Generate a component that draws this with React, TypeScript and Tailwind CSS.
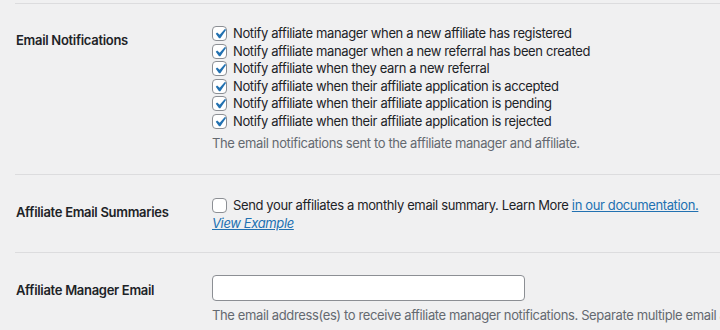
import React from 'react';

const font = { fontFamily: 'Inter, "Noto Sans", sans-serif' };

const Check = ({ checked }: { checked: boolean }) => (
  <span className="relative inline-block w-[15px] h-[15px] shrink-0 rounded-[4px] border border-[#8c8f94] bg-white">
    {checked && (
      <svg viewBox="0 0 20 20" className="absolute -left-[3px] -top-[3px] w-[20px] h-[20px]">
        <path d="M14.83 4.89l1.34.94-5.81 8.38H9.02L5.78 9.67l1.34-1.25 2.57 2.4z" fill="#2271b1" />
      </svg>
    )}
  </span>
);

const notifications = [
  'Notify affiliate manager when a new affiliate has registered',
  'Notify affiliate manager when a new referral has been created',
  'Notify affiliate when they earn a new referral',
  'Notify affiliate when their affiliate application is accepted',
  'Notify affiliate when their affiliate application is pending',
  'Notify affiliate when their affiliate application is rejected',
];

export default function App() {
  return (
    <div className="w-[720px] h-[330px] overflow-hidden bg-[#f0f0f1] text-[#1d2327] text-[13px] tracking-[-0.37px]" style={font}>
      <div className="pt-[3px] ml-[15px]">
        {/* Email notifications */}
        <div className="flex border-t border-[#dcdcde] pb-[22px]">
          <div className="w-[197px] shrink-0 pl-[1px] pt-[27px] font-semibold leading-[18px] tracking-[-0.3px]">Email Notifications</div>
          <div className="pt-[21px]">
            {notifications.map((n) => (
              <div key={n} className="flex items-center gap-[6px] h-[17.5px] whitespace-nowrap">
                <Check checked />
                <span>{n}</span>
              </div>
            ))}
            <p className="mt-[4px] leading-[18px] text-[#646970] whitespace-nowrap">
              The email notifications sent to the affiliate manager and affiliate.
            </p>
          </div>
        </div>

        {/* Email summaries */}
        <div className="flex border-t border-[#dcdcde] pb-[20px]">
          <div className="w-[197px] shrink-0 pl-[1px] pt-[28px] font-semibold leading-[18px] tracking-[-0.3px]">Affiliate Email Summaries</div>
          <div className="pt-[21px] leading-[18px]">
            <div className="flex items-center gap-[6px] whitespace-nowrap">
              <Check checked={false} />
              <span>
                Send your affiliates a monthly email summary. Learn More{' '}
                <a className="text-[#2271b1] underline">in our documentation.</a>
              </span>
            </div>
            <a className="italic text-[#2271b1] underline">View Example</a>
          </div>
        </div>

        {/* Manager email */}
        <div className="flex border-t border-[#dcdcde]">
          <div className="w-[197px] shrink-0 pl-[1px] pt-[28px] font-semibold leading-[18px] tracking-[-0.3px] whitespace-nowrap">Affiliate Manager Email</div>
          <div className="pt-[22px] min-w-0">
            <input className="block w-[313px] h-[26px] rounded-[4px] border border-[#8c8f94] bg-white px-2" />
            <p className="mt-[5px] leading-[18px] text-[#646970] whitespace-nowrap">
              The email address(es) to receive affiliate manager notifications. Separate multiple email addresses with a comma (,).
            </p>
          </div>
        </div>
      </div>
    </div>
  );
}
